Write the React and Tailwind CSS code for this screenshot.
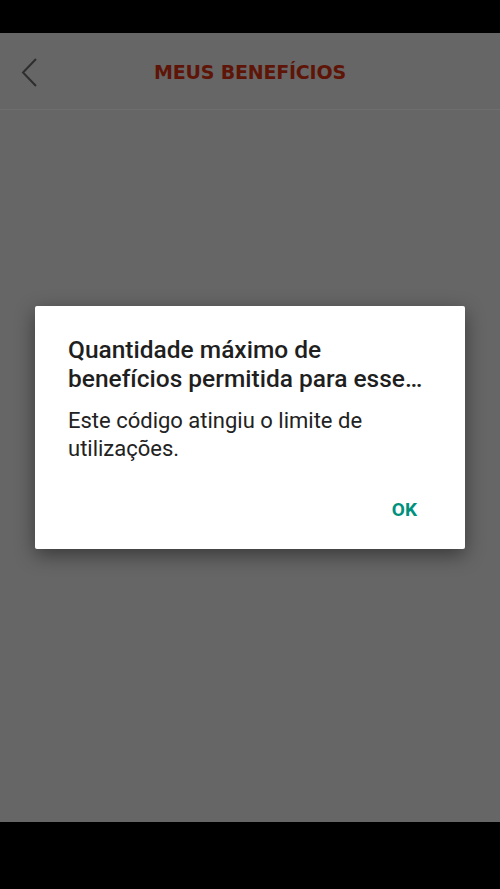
export default function App() {
  return (
    <div className="w-[500px] h-[889px] bg-black flex flex-col font-['Roboto',sans-serif]">
      <div className="h-[33px] bg-black" />
      <div className="flex-1 bg-[#666666] flex flex-col">
        {/* Header */}
        <div className="h-[77px] flex items-center relative border-b border-[#6e6e6e]">
          <button className="absolute left-[19px] top-[24px] text-[#2e2e2e]">
            <svg width="22" height="32" viewBox="0 0 22 32" fill="none">
              <path d="M17 2 L4 15.5 L17 29" stroke="currentColor" strokeWidth="2" />
            </svg>
          </button>
          <h1 className="w-full text-center text-[19px] font-bold tracking-[-0.2px] text-[#5e1507] font-['DejaVu_Sans',sans-serif] pt-[2px]">
            MEUS BENEFÍCIOS
          </h1>
        </div>

        {/* Dialog overlay area */}
        <div className="flex-1 flex flex-col items-center pt-[196px]">
          <div className="w-[430px] h-[243px] bg-white rounded-[2px] shadow-[0_6px_20px_rgba(0,0,0,0.45)] pl-[33px] pr-[30px] pt-[29px] flex flex-col">
            <h2 className="text-[24.5px] leading-[29px] font-medium text-[#1f1f1f]">
              Quantidade máximo de benefícios permitida para esse…
            </h2>
            <p className="mt-[14px] text-[22px] leading-[28px] text-[#222222]">
              Este código atingiu o limite de utilizações.
            </p>
            <div className="flex justify-end mt-auto mb-[25px]">
              <button className="text-[19px] font-bold text-[#00917d] pr-[18px]">OK</button>
            </div>
          </div>
        </div>
      </div>
      <div className="h-[67px] bg-black" />
    </div>
  );
}
